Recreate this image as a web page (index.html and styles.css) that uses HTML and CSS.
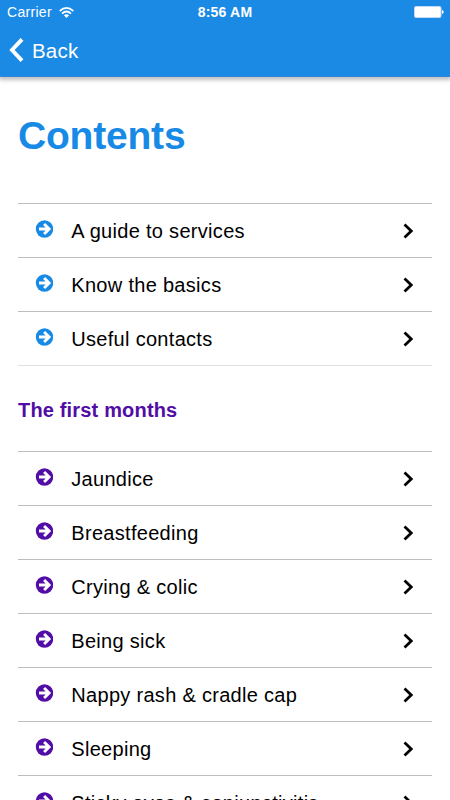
FILE: index.html
```html
<!DOCTYPE html>
<html lang="en">
<head>
<meta charset="utf-8">
<title>Contents</title>
<link rel="stylesheet" href="styles.css">
</head>
<body>
<svg class="defs" aria-hidden="true">
  <symbol id="go" viewBox="0 0 18 18"><circle cx="9.5" cy="9" r="8.7" fill="currentColor"/><path d="M4 9H13.5M9.1 4L14.1 9L9.1 14" fill="none" stroke="#fff" stroke-width="2.9"/></symbol>
  <symbol id="chevron" viewBox="0 0 10 16"><path d="M1.5 1.5L8.2 8L1.5 14.5" fill="none" stroke="currentColor" stroke-width="2.7"/></symbol>
</svg>
<header class="header">
  <div class="status">
    <div class="carrier"><span>Carrier</span>
      <svg class="wifi" viewBox="0 0 15 11"><g fill="none" stroke="#fff" stroke-width="1.7"><path d="M.7 4Q7.5-2.2 14.3 4"/><path d="M3 6.6Q7.5 2.4 12 6.6"/></g><path d="M4.9 8.3Q7.5 6.1 10.1 8.3L7.5 11Z" fill="#fff"/></svg>
    </div>
    <span class="time">8:56 AM</span>
    <svg class="battery" viewBox="0 0 30 12"><rect x=".5" y=".5" width="26.5" height="11" rx="1.5" fill="#fff" stroke="#c5d9f8"/><path d="M28 4Q29.7 4.4 29.7 6T28 8Z" fill="#fff"/></svg>
  </div>
  <div class="nav">
    <svg class="back-icon" viewBox="0 0 15 24"><path d="M13 1.3L3 12L13 22.7" fill="none" stroke="#fff" stroke-width="3.9"/></svg>
    <span class="back">Back</span>
  </div>
</header>
<main class="content">
  <h1 class="title">Contents</h1>
  <ul class="list general">
    <li class="row"><svg class="go"><use href="#go"/></svg><span class="label">A guide to services</span><svg class="chevron"><use href="#chevron"/></svg></li>
    <li class="row"><svg class="go"><use href="#go"/></svg><span class="label">Know the basics</span><svg class="chevron"><use href="#chevron"/></svg></li>
    <li class="row"><svg class="go"><use href="#go"/></svg><span class="label">Useful contacts</span><svg class="chevron"><use href="#chevron"/></svg></li>
  </ul>
  <h2 class="section">The first months</h2>
  <ul class="list months">
    <li class="row"><svg class="go"><use href="#go"/></svg><span class="label">Jaundice</span><svg class="chevron"><use href="#chevron"/></svg></li>
    <li class="row"><svg class="go"><use href="#go"/></svg><span class="label">Breastfeeding</span><svg class="chevron"><use href="#chevron"/></svg></li>
    <li class="row"><svg class="go"><use href="#go"/></svg><span class="label">Crying &amp; colic</span><svg class="chevron"><use href="#chevron"/></svg></li>
    <li class="row"><svg class="go"><use href="#go"/></svg><span class="label">Being sick</span><svg class="chevron"><use href="#chevron"/></svg></li>
    <li class="row"><svg class="go"><use href="#go"/></svg><span class="label">Nappy rash &amp; cradle cap</span><svg class="chevron"><use href="#chevron"/></svg></li>
    <li class="row"><svg class="go"><use href="#go"/></svg><span class="label">Sleeping</span><svg class="chevron"><use href="#chevron"/></svg></li>
    <li class="row"><svg class="go"><use href="#go"/></svg><span class="label">Sticky eyes &amp; conjunctivitis</span><svg class="chevron"><use href="#chevron"/></svg></li>
  </ul>
</main>
</body>
</html>
```
FILE: styles.css
```css
* { box-sizing: border-box; }
html, body { height: 100%; }
body {
  margin: 0;
  overflow: hidden;
  background: #fff;
  color: #000;
  font-family: "Liberation Sans", Arial, sans-serif;
  display: flex;
  flex-direction: column;
}
.defs { display: none; }
.header {
  flex: none;
  height: 77px;
  background: #1b8ae5;
  border-bottom: 1px solid #3486da;
  box-shadow: 0 2px 4px 1px rgba(0, 0, 0, .25);
  color: #fff;
}
.status {
  height: 24px;
  padding: 0 6px 0 7px;
  display: grid;
  grid-template-columns: 1fr auto 1fr;
  align-items: center;
  font-size: 14px;
}
.carrier { display: flex; align-items: center; gap: 7px; letter-spacing: .3px; }
.wifi { width: 15px; height: 11px; }
.time { font-weight: bold; font-size: 14px; letter-spacing: .2px; margin-right: 1px; }
.battery { justify-self: end; width: 30px; height: 12px; }
.nav { height: 52px; padding-left: 9px; display: flex; align-items: center; gap: 8px; }
.back-icon { width: 15px; height: 24px; }
.back { font-size: 20.5px; letter-spacing: .2px; padding-top: 1px; }
.content { flex: 1; min-height: 0; padding: 0 18px; }
.title {
  margin: 0;
  height: 126px;
  padding-top: 36px;
  font-size: 39px;
  line-height: 46px;
  letter-spacing: -.2px;
  color: #178ae6;
}
.list { margin: 0; padding: 0; list-style: none; }
.row {
  height: 54px;
  border-top: 1px solid #bdbdbd;
  display: flex;
  align-items: center;
  padding: 0 19px 0 17px;
}
.general { color: #178ae6; border-bottom: 1px solid #e0e0e0; }
.months { color: #510da5; }
.go { flex: none; width: 18px; height: 18px; margin: 0 18.3px 3px 0; }
.label { flex: 1; color: #000; font-size: 20px; line-height: 24px; letter-spacing: .3px; white-space: nowrap; }
.chevron { flex: none; width: 10px; height: 16px; color: #000; }
.section {
  margin: 0;
  height: 85px;
  padding-top: 32px;
  font-size: 20px;
  line-height: 24px;
  letter-spacing: .17px;
  color: #510da5;
}
```
